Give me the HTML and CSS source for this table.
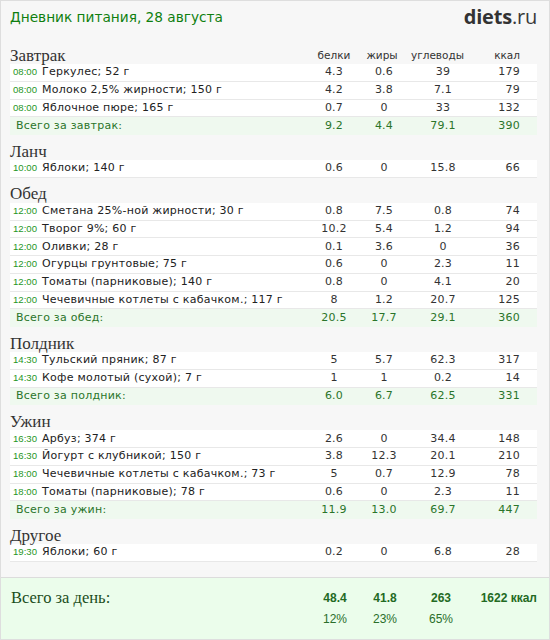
FILE: index.html
```html
<!DOCTYPE html>
<html lang="ru">
<head>
<meta charset="utf-8">
<title>Дневник питания</title>
<link rel="stylesheet" href="styles.css">
</head>
<body>
<div class="page">
  <header class="top">
    <h1 class="title">Дневник питания, 28 августа</h1>
    <div class="logo"><b>diets</b>.ru</div>
  </header>

  <section class="meal">
    <div class="meal-head">
      <h2 class="meal-name">Завтрак</h2>
      <span class="col-label">белки</span>
      <span class="col-label">жиры</span>
      <span class="col-label">углеводы</span>
      <span class="col-label right">ккал</span>
    </div>
    <div class="row"><span class="time">08:00</span><span class="name">Геркулес; 52 г</span><span class="num">4.3</span><span class="num">0.6</span><span class="num">39</span><span class="num kcal">179</span></div>
    <div class="row"><span class="time">08:00</span><span class="name">Молоко 2,5% жирности; 150 г</span><span class="num">4.2</span><span class="num">3.8</span><span class="num">7.1</span><span class="num kcal">79</span></div>
    <div class="row"><span class="time">08:00</span><span class="name">Яблочное пюре; 165 г</span><span class="num">0.7</span><span class="num">0</span><span class="num">33</span><span class="num kcal">132</span></div>
    <div class="row total"><span class="total-label">Всего за завтрак:</span><span class="num">9.2</span><span class="num">4.4</span><span class="num">79.1</span><span class="num kcal">390</span></div>
  </section>

  <section class="meal">
    <div class="meal-head"><h2 class="meal-name">Ланч</h2></div>
    <div class="row"><span class="time">10:00</span><span class="name">Яблоки; 140 г</span><span class="num">0.6</span><span class="num">0</span><span class="num">15.8</span><span class="num kcal">66</span></div>
  </section>

  <section class="meal">
    <div class="meal-head"><h2 class="meal-name">Обед</h2></div>
    <div class="row"><span class="time">12:00</span><span class="name">Сметана 25%-ной жирности; 30 г</span><span class="num">0.8</span><span class="num">7.5</span><span class="num">0.8</span><span class="num kcal">74</span></div>
    <div class="row"><span class="time">12:00</span><span class="name">Творог 9%; 60 г</span><span class="num">10.2</span><span class="num">5.4</span><span class="num">1.2</span><span class="num kcal">94</span></div>
    <div class="row"><span class="time">12:00</span><span class="name">Оливки; 28 г</span><span class="num">0.1</span><span class="num">3.6</span><span class="num">0</span><span class="num kcal">36</span></div>
    <div class="row"><span class="time">12:00</span><span class="name">Огурцы грунтовые; 75 г</span><span class="num">0.6</span><span class="num">0</span><span class="num">2.3</span><span class="num kcal">11</span></div>
    <div class="row"><span class="time">12:00</span><span class="name">Томаты (парниковые); 140 г</span><span class="num">0.8</span><span class="num">0</span><span class="num">4.1</span><span class="num kcal">20</span></div>
    <div class="row"><span class="time">12:00</span><span class="name">Чечевичные котлеты с кабачком.; 117 г</span><span class="num">8</span><span class="num">1.2</span><span class="num">20.7</span><span class="num kcal">125</span></div>
    <div class="row total"><span class="total-label">Всего за обед:</span><span class="num">20.5</span><span class="num">17.7</span><span class="num">29.1</span><span class="num kcal">360</span></div>
  </section>

  <section class="meal">
    <div class="meal-head"><h2 class="meal-name">Полдник</h2></div>
    <div class="row"><span class="time">14:30</span><span class="name">Тульский пряник; 87 г</span><span class="num">5</span><span class="num">5.7</span><span class="num">62.3</span><span class="num kcal">317</span></div>
    <div class="row"><span class="time">14:30</span><span class="name">Кофе молотый (сухой); 7 г</span><span class="num">1</span><span class="num">1</span><span class="num">0.2</span><span class="num kcal">14</span></div>
    <div class="row total"><span class="total-label">Всего за полдник:</span><span class="num">6.0</span><span class="num">6.7</span><span class="num">62.5</span><span class="num kcal">331</span></div>
  </section>

  <section class="meal">
    <div class="meal-head"><h2 class="meal-name">Ужин</h2></div>
    <div class="row"><span class="time">16:30</span><span class="name">Арбуз; 374 г</span><span class="num">2.6</span><span class="num">0</span><span class="num">34.4</span><span class="num kcal">148</span></div>
    <div class="row"><span class="time">16:30</span><span class="name">Йогурт с клубникой; 150 г</span><span class="num">3.8</span><span class="num">12.3</span><span class="num">20.1</span><span class="num kcal">210</span></div>
    <div class="row"><span class="time">18:00</span><span class="name">Чечевичные котлеты с кабачком.; 73 г</span><span class="num">5</span><span class="num">0.7</span><span class="num">12.9</span><span class="num kcal">78</span></div>
    <div class="row"><span class="time">18:00</span><span class="name">Томаты (парниковые); 78 г</span><span class="num">0.6</span><span class="num">0</span><span class="num">2.3</span><span class="num kcal">11</span></div>
    <div class="row total"><span class="total-label">Всего за ужин:</span><span class="num">11.9</span><span class="num">13.0</span><span class="num">69.7</span><span class="num kcal">447</span></div>
  </section>

  <section class="meal">
    <div class="meal-head"><h2 class="meal-name">Другое</h2></div>
    <div class="row"><span class="time">19:30</span><span class="name">Яблоки; 60 г</span><span class="num">0.2</span><span class="num">0</span><span class="num">6.8</span><span class="num kcal">28</span></div>
  </section>

  <footer class="day">
    <div class="day-label">Всего за день:</div>
    <div class="day-num">48.4</div>
    <div class="day-num">41.8</div>
    <div class="day-num">263</div>
    <div class="day-num right">1622 ккал</div>
    <div></div>
    <div class="day-pct">12%</div>
    <div class="day-pct">23%</div>
    <div class="day-pct">65%</div>
    <div></div>
  </footer>
</div>
</body>
</html>
```

FILE: styles.css
```css
* { box-sizing: border-box; margin: 0; padding: 0; }

html, body { background: #f7f7f7; }
body { margin: 0; }

.page {
  width: 550px;
  height: 640px;
  border: 1px solid #dedede;
  background: #f7f7f7;
  display: flex;
  flex-direction: column;
  font-family: "DejaVu Sans", Verdana, sans-serif;
  color: #222;
}

.top {
  height: 38px;
  padding: 6px 12px 0 9px;
  display: flex;
  justify-content: space-between;
  align-items: flex-start;
}

.title {
  font-family: "DejaVu Sans", sans-serif;
  font-weight: normal;
  font-size: 13.7px;
  line-height: 20px;
  color: #0f7f0f;
}

.logo {
  font-family: "Open Sans", sans-serif;
  font-size: 20px;
  line-height: 20px;
  color: #3a3a3a;
  letter-spacing: -0.2px;
}
.logo b { font-weight: 700; color: #333; }

.meal { padding: 0 12px 0 9px; }

.meal-head {
  height: 25px;
  padding-top: 6.5px;
  display: grid;
  grid-template-columns: 1fr 50px 46px 65px 50px;
  padding-right: 17px;
  align-items: center;
}

.meal-name {
  font-family: "Liberation Serif", "Times New Roman", serif;
  font-weight: normal;
  font-size: 17px;
  line-height: 19px;
  color: #333;
}

.col-label {
  font-size: 10.5px;
  line-height: 19px;
  color: #333;
  text-align: center;
}
.col-label.right { text-align: right; }

.row {
  height: 17.75px;
  background: #fff;
  border-bottom: 1px solid #e8e8e8;
  display: grid;
  grid-template-columns: 32px 1fr 50px 50px 68px 43px;
  padding-right: 17px;
  align-items: center;
  font-size: 11px;
  line-height: 16px;
  letter-spacing: 0.25px;
  color: #222;
}

.time {
  font-family: "Liberation Sans", Arial, sans-serif;
  font-size: 9.6px;
  letter-spacing: 0;
  color: #1f961f;
  padding-left: 3px;
}

.name { white-space: nowrap; }

.num { text-align: center; color: #333; }
.num.kcal { text-align: right; }

.row.total {
  background: #eff9ef;
  border-bottom-color: #eff9ef;
  color: #2a752a;
}
.row.total .num { color: #2a752a; }

.total-label {
  grid-column: 1 / 3;
  padding-left: 6px;
}

.day {
  margin-top: auto;
  height: 62px;
  border-top: 1px solid #dcdcdc;
  background: #ebfdeb;
  display: grid;
  grid-template-columns: 1fr 50px 50px 62px 65px;
  grid-template-rows: 23px 19px;
  padding: 8px 12px 0 10px;
  align-items: center;
  font-family: "Liberation Sans", Arial, sans-serif;
}

.day-label {
  font-family: "Liberation Serif", "Times New Roman", serif;
  font-size: 16.5px;
  color: #1b4d1b;
}

.day-num {
  font-weight: bold;
  font-size: 12px;
  color: #236a23;
  text-align: center;
}
.day-num.right { text-align: right; }

.day-pct {
  font-size: 12px;
  color: #2a6e2a;
  text-align: center;
}
```
